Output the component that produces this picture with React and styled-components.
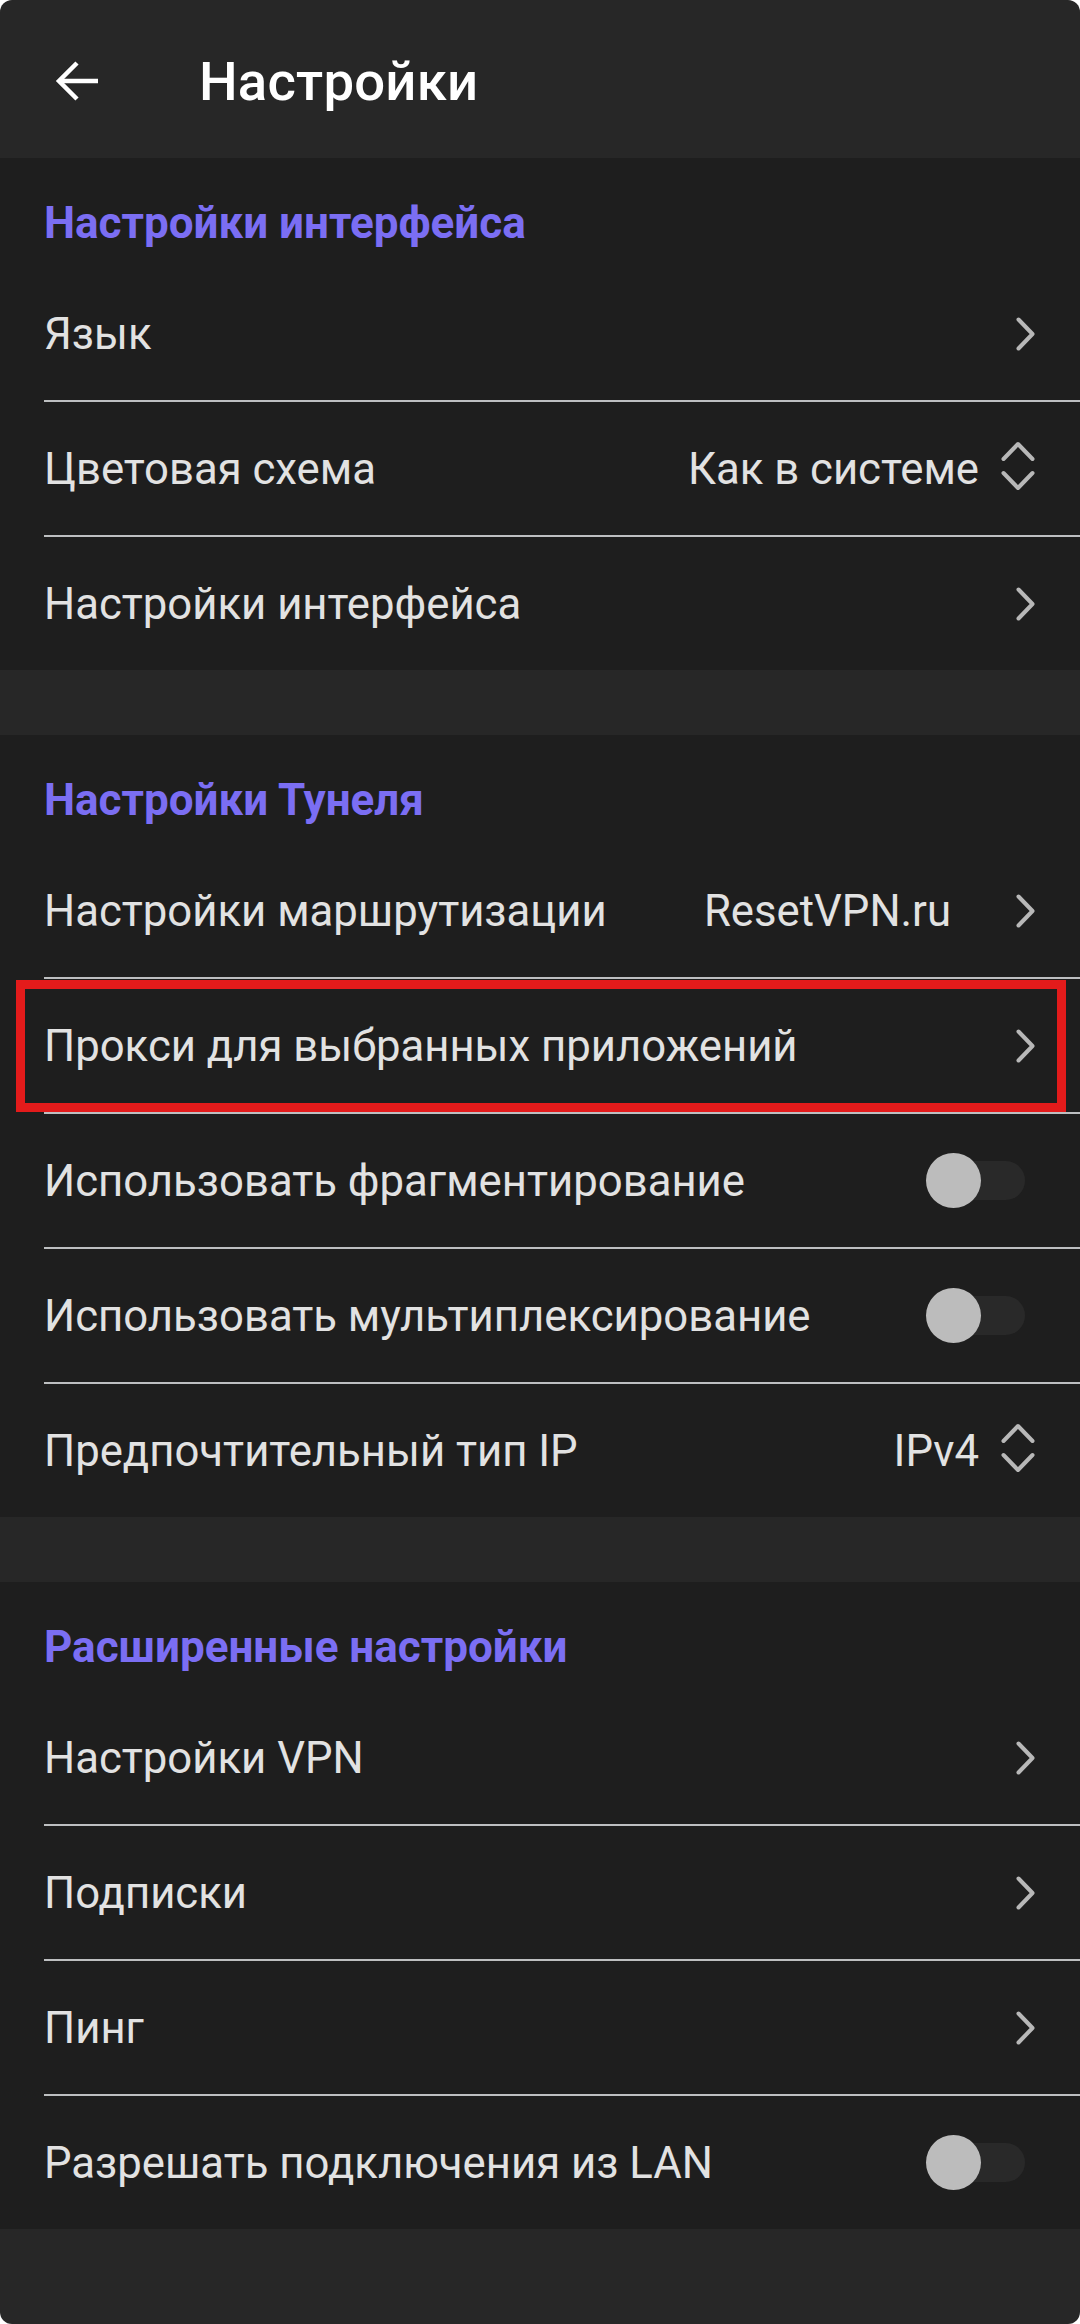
import React from "react";
import styled, {createGlobalStyle} from "styled-components";

const GlobalStyle = createGlobalStyle`
    html, body {
        margin: 0;
        padding: 0;
        background: #ffffff;
    }

    * {
        box-sizing: border-box;
    }
`;

const Screen = styled.main`
    width: 1080px;
    min-height: 2324px;
    background: #272727;
    border-radius: 12px;
    overflow: hidden;
    font-family: Roboto, "Noto Sans", sans-serif;
    color: #e2e2e2;
`;

const TopBar = styled.header`
    height: 158px;
    display: flex;
    align-items: center;
    padding: 4px 0 0 55px;
    gap: 100px;
`;

const BackButton = styled.button`
    width: 44px;
    height: 44px;
    padding: 0;
    border: none;
    background: none;
    display: flex;
    align-items: center;
    justify-content: center;
    cursor: pointer;
`;

const Title = styled.h1`
    margin: 0;
    font-size: 54.5px;
    font-weight: 500;
    color: #ffffff;
    letter-spacing: 0.2px;
`;

const Section = styled.section`
    background: #1e1e1e;
    margin-bottom: 65px;
`;

const SectionTitle = styled.h2`
    margin: 0;
    height: 109px;
    padding: 38px 0 0 44px;
    font-size: 44px;
    line-height: 54px;
    font-weight: 700;
    color: #7b6ef3;
`;

const Row = styled.div`
    position: relative;
    height: 133px;
    display: flex;
    align-items: center;
    padding: 0 45px 0 44px;
    font-size: 43.7px;
`;

const Divider = styled.div`
    height: 2px;
    margin-left: 44px;
    background: #bdbfc1;
`;

const Label = styled.span`
    flex: 1;
    color: #e2e2e2;
    white-space: nowrap;
`;

const Value = styled.span`
    color: #e2e2e2;
    margin-right: ${p => (p.$wide ? "65px" : "22px")};
    white-space: nowrap;
`;

const Highlight = styled.div`
    position: absolute;
    top: 1px;
    bottom: 0;
    left: 16px;
    right: 14px;
    border: 9px solid #e31b1b;
    pointer-events: none;
`;

const Toggle = styled.div`
    position: relative;
    width: 99px;
    height: 55px;
    margin-right: 10px;
    display: flex;
    align-items: center;
    justify-content: flex-end;
`;

const Track = styled.div`
    width: 93px;
    height: 39px;
    border-radius: 20px;
    background: #292929;
`;

const Thumb = styled.div`
    position: absolute;
    left: 0;
    top: 0;
    width: 55px;
    height: 55px;
    border-radius: 50%;
    background: #bcbcbc;
`;

const IconBox = styled.span`
    display: flex;
    align-items: center;
    margin-bottom: ${p => (p.$lift ? "6px" : "0")};
`;

function ArrowBack() {
    return (
        <svg width="44" height="44" viewBox="0 0 44 44" fill="none" stroke="#ffffff" strokeWidth="4.5">
            <line x1="4" y1="22" x2="43" y2="22"/>
            <polyline points="22,4 4,22 22,40"/>
        </svg>
    );
}

function Chevron() {
    return (
        <IconBox>
            <svg width="19" height="34" viewBox="0 0 19 34" fill="none" stroke="#b8b8b8" strokeWidth="4"
                 strokeLinecap="round" strokeLinejoin="round">
                <polyline points="2.5,2.5 16.5,17 2.5,31.5"/>
            </svg>
        </IconBox>
    );
}

function UpDown() {
    return (
        <IconBox $lift>
            <svg width="34" height="50" viewBox="0 0 34 50" fill="none" stroke="#b8b8b8" strokeWidth="4"
                 strokeLinecap="round" strokeLinejoin="round">
                <polyline points="2.5,18 17,3 31.5,18"/>
                <polyline points="2.5,32 17,47 31.5,32"/>
            </svg>
        </IconBox>
    );
}

function Switch() {
    return (
        <Toggle>
            <Track/>
            <Thumb/>
        </Toggle>
    );
}

const sections = [
    {
        title: "Настройки интерфейса",
        rows: [
            {label: "Язык", kind: "link"},
            {label: "Цветовая схема", value: "Как в системе", kind: "select"},
            {label: "Настройки интерфейса", kind: "link"},
        ],
    },
    {
        title: "Настройки Тунеля",
        rows: [
            {label: "Настройки маршрутизации", value: "ResetVPN.ru", kind: "link"},
            {label: "Прокси для выбранных приложений", kind: "link", marked: true},
            {label: "Использовать фрагментирование", kind: "switch"},
            {label: "Использовать мультиплексирование", kind: "switch"},
            {label: "Предпочтительный тип IP", value: "IPv4", kind: "select"},
        ],
    },
    {
        title: "Расширенные настройки",
        rows: [
            {label: "Настройки VPN", kind: "link"},
            {label: "Подписки", kind: "link"},
            {label: "Пинг", kind: "link"},
            {label: "Разрешать подключения из LAN", kind: "switch"},
        ],
    },
];

function SettingRow({row}) {
    return (
        <Row>
            <Label>{row.label}</Label>
            {row.value && <Value $wide={row.kind === "link"}>{row.value}</Value>}
            {row.kind === "link" && <Chevron/>}
            {row.kind === "select" && <UpDown/>}
            {row.kind === "switch" && <Switch/>}
            {row.marked && <Highlight/>}
        </Row>
    );
}

export default function App() {
    return (
        <>
            <GlobalStyle/>
            <Screen>
                <TopBar>
                    <BackButton aria-label="Назад"><ArrowBack/></BackButton>
                    <Title>Настройки</Title>
                </TopBar>
                {sections.map(section => (
                    <Section key={section.title}>
                        <SectionTitle>{section.title}</SectionTitle>
                        {section.rows.map((row, i) => (
                            <React.Fragment key={row.label}>
                                {i > 0 && <Divider/>}
                                <SettingRow row={row}/>
                            </React.Fragment>
                        ))}
                    </Section>
                ))}
            </Screen>
        </>
    );
}
